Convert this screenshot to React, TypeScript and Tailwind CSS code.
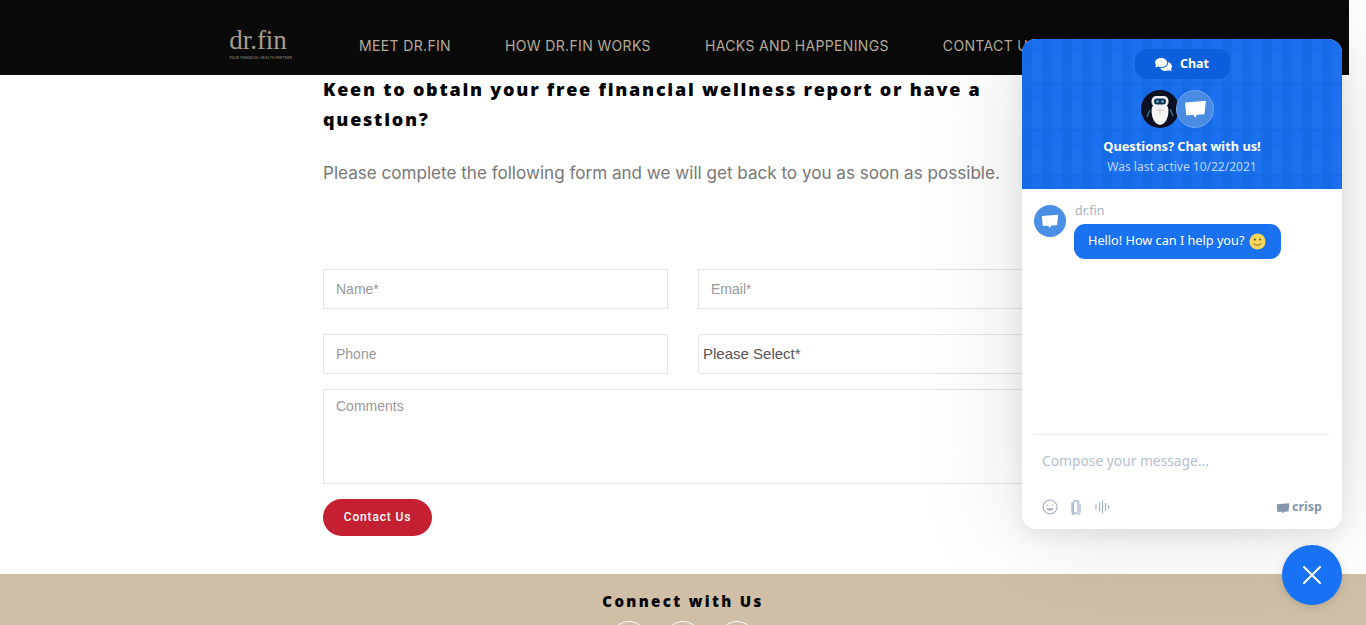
import { FaComments } from "react-icons/fa";

const NAV = ["MEET DR.FIN", "HOW DR.FIN WORKS", "HACKS AND HAPPENINGS", "CONTACT US"];

function CrispBubble({ className, fill }: { className?: string; fill: string }) {
  return (
    <svg viewBox="0 0 22 18" className={className}>
      <path d="M1 2.2 21 0.6 19.6 13.6 12.6 14 10.6 17 9 14.2 2.2 14.4Z" fill={fill} />
    </svg>
  );
}

function Robot() {
  return (
    <svg viewBox="0 0 38 38" className="w-[38px] h-[38px] shrink-0 relative">
      <circle cx="19" cy="19" r="19" fill="#0c1022" />
      <path d="M11 17c2-3 14-3 16 0 1.500 7-1 17-8 18-7-1-9.500-11-8-18Z" fill="#f4f4f4" />
      <rect x="10.500" y="6" width="17" height="11" rx="5" fill="#eef3f6" />
      <rect x="13" y="8.500" width="12" height="6" rx="3" fill="#16324d" />
      <circle cx="16.500" cy="11.500" r="1.200" fill="#5fc4ea" />
      <circle cx="21.500" cy="11.500" r="1.200" fill="#5fc4ea" />
      <path d="M9 20 6 27M29 19l3 7" stroke="#3f6f86" strokeWidth="1.500" />
      <path d="M15 20h8M19 20v5" stroke="#c9a8a8" strokeWidth=".7" />
    </svg>
  );
}

function Pattern() {
  return (
    <svg className="absolute inset-0 w-full h-full" aria-hidden="true">
      <defs>
        <pattern id="keys" width="20" height="46" patternUnits="userSpaceOnUse">
          <rect x="0" y="0" width="10" height="46" fill="#1468e4" opacity=".45" />
          <rect x="1" y="0" width="7" height="30" fill="#0f63dc" opacity=".3" />
          <rect x="11" y="16" width="8" height="26" fill="#2f7df0" opacity=".25" />
          <rect x="0" y="44" width="20" height="2" fill="#0f63dc" opacity=".45" />
        </pattern>
      </defs>
      <rect width="100%" height="100%" fill="url(#keys)" />
    </svg>
  );
}

function ChatWidget() {
  return (
    <>
      <div className="absolute left-[1022px] top-[39px] w-[320px] h-[490px] rounded-[14px] bg-white overflow-hidden flex flex-col shadow-[0_0_110px_rgba(0,0,0,0.13),0_6px_20px_rgba(0,0,0,0.08)] font-['Noto_Sans',sans-serif]">
        <div className="relative h-[150px] shrink-0 bg-[#1a6fee] flex flex-col items-center pt-[10px]">
          <Pattern />
          <div className="relative w-[95px] h-[30px] rounded-[12px] bg-[#0b5fdc] flex items-center justify-center gap-[8px] text-white text-[12.5px] font-bold">
            <FaComments className="text-[17px]" />
            <span>Chat</span>
          </div>
          <div className="relative flex mt-[11px] ml-[-9px]">
            <Robot />
            <div className="relative -ml-[3px] w-[38px] h-[38px] rounded-full bg-[#4a8ce4] border border-[#6fa5ec] flex items-center justify-center">
              <CrispBubble className="w-[23px] h-[19px]" fill="#ffffff" />
            </div>
          </div>
          <div className="relative mt-[8px] text-white text-[12.8px] leading-[20px] font-bold">Questions? Chat with us!</div>
          <div className="relative mt-[1px] text-[#bcd5f7] text-[12px] leading-[20px]">Was last active 10/22/2021</div>
        </div>
        <div className="flex-1 flex pl-[12px] pt-[16px] gap-[8px] min-h-0">
          <div className="w-[32px] h-[32px] rounded-full bg-[#4a8fe3] flex items-center justify-center shrink-0">
            <CrispBubble className="w-[18px] h-[15px]" fill="#ffffff" />
          </div>
          <div>
            <div className="text-[12.5px] leading-[12px] text-[#a9b5c1] ml-[1px]">dr.fin</div>
            <div className="mt-[7px] h-[35px] w-[207px] rounded-[11px] bg-[#1a72f0] text-white text-[12.7px] flex items-center pl-[14px] gap-[5px] pb-[1px]">
              <span>Hello! How can I help you?</span>
              <svg viewBox="0 0 18 18" className="w-[17px] h-[17px]">
                <circle cx="9" cy="9" r="8.500" fill="#f5d65a" />
                <circle cx="6.200" cy="7" r="1.100" fill="#6b5a20" />
                <circle cx="11.800" cy="7" r="1.100" fill="#6b5a20" />
                <path d="M5 11c1.500 2.500 6.500 2.500 8 0" stroke="#6b5a20" strokeWidth="1" fill="none" />
              </svg>
            </div>
          </div>
        </div>
        <div className="mx-[12px] border-t border-[#e8edf1] h-[95px] shrink-0 flex flex-col">
          <div className="pl-[8px] pt-[16px] text-[13.8px] leading-[20px] text-[#b3c0cf]">Compose your message...</div>
          <div className="flex items-center mt-[27px] pl-[8px] pr-[8px]">
            <svg viewBox="0 0 16 16" className="w-[16px] h-[16px]" fill="none" stroke="#a3b1c4" strokeWidth="1.200">
              <circle cx="8" cy="8" r="7" />
              <circle cx="5.500" cy="6.200" r=".8" fill="#a3b1c4" stroke="none" />
              <circle cx="10.500" cy="6.200" r=".8" fill="#a3b1c4" stroke="none" />
              <path d="M4.200 9.200c1.200 3.300 6.400 3.300 7.600 0Z" fill="#a3b1c4" stroke="none" />
            </svg>
            <svg viewBox="0 0 10 16" className="w-[10px] h-[16px] ml-[13px]" fill="none" stroke="#a3b1c4" strokeWidth="1.200" strokeLinecap="round">
              <path d="M7 4v8a2.300 2.300 0 0 1-4.600 0V3.500a3 3 0 0 1 5.600 0M9 5v7.500a4 4 0 0 1-8 0V4" />
            </svg>
            <svg viewBox="0 0 15 14" className="w-[15px] h-[14px] ml-[14px]" stroke="#a3b1c4" strokeWidth="1.200">
              <path d="M1 4.500v5M4.500 2.500v9M7.500 0.500v13M10.500 3v8M13.500 5v4" />
            </svg>
            <div className="ml-auto flex items-center gap-[2px] text-[#8497ac] text-[12.5px] font-bold">
              <CrispBubble className="w-[14px] h-[13px] mt-[2px]" fill="#8497ac" />
              <span>crisp</span>
            </div>
          </div>
        </div>
      </div>
      <div className="absolute left-[1282px] top-[545px] w-[60px] h-[60px] rounded-full bg-[#1972f5] flex items-center justify-center shadow-[0_2px_10px_rgba(0,0,0,0.12)]">
        <svg viewBox="0 0 18 18" className="w-[18px] h-[18px]" stroke="#ffffff" strokeWidth="2" strokeLinecap="round">
          <path d="M1 1l16 16M17 1 1 17" />
        </svg>
      </div>
    </>
  );
}

const field =
  "h-[40px] border border-[#e4e4e4] bg-white px-[12px] text-[14px] font-['Liberation_Sans',sans-serif] outline-none placeholder:text-[#999999]";

export default function App() {
  return (
    <div className="relative h-[625px] w-[1366px] overflow-hidden bg-white flex flex-col">
      <header className="h-[75px] w-[1349px] shrink-0 bg-[#0a0a0a] flex items-center pl-[229px] pt-[15px] font-['Inter',sans-serif]">
        <div className="w-[130px] shrink-0 text-[#a89e8c]">
          <div className="w-[58px] text-center font-['Liberation_Serif',serif] text-[27px] leading-[24px] -mt-[2px]">dr.fin</div>
          <div className="w-[58px] mt-[4px] text-center text-[3.500px] leading-[5px] tracking-[0.02em] whitespace-nowrap">YOUR FINANCIAL HEALTH PARTNER</div>
        </div>
        <nav className="flex gap-[54px] text-[14px] tracking-[0.025em] text-[#b5aa97] whitespace-nowrap">
          {NAV.map((n) => (
            <span key={n}>{n}</span>
          ))}
        </nav>
      </header>

      <main className="flex-1 pl-[323px] min-h-0">
        <h2 className="-mt-[1px] w-[680px] text-[18px] leading-[30px] font-extrabold tracking-[0.098em] text-black font-['Open_Sans',sans-serif]">
          Keen to obtain your free financial wellness report or have a question?
        </h2>
        <p className="mt-[24px] text-[17.08px] leading-[30px] text-[#777777] whitespace-nowrap font-['Inter',sans-serif]">
          Please complete the following form and we will get back to you as soon as possible.
        </p>
        <form className="mt-[81px] w-[720px] flex flex-col">
          <div className="flex gap-[30px]">
            <input className={`${field} w-[345px]`} placeholder="Name*" />
            <input className={`${field} w-[345px]`} placeholder="Email*" />
          </div>
          <div className="flex gap-[30px] mt-[25px]">
            <input className={`${field} w-[345px]`} placeholder="Phone" />
            <div className="h-[40px] w-[345px] border border-[#e4e4e4] rounded-[3px] pl-[4px] text-[15px] leading-[37px] text-[#555555] font-['Liberation_Sans',sans-serif]">
              Please Select*
            </div>
          </div>
          <textarea
            className={`${field} mt-[15px] !h-[95px] w-[720px] pt-[6px] resize-none`}
            placeholder="Comments"
          />
          <button
            type="button"
            className="mt-[15px] w-[109px] h-[37px] rounded-full bg-[#c42032] pb-[2px] text-white text-[12px] font-medium tracking-[0.07em] font-['Roboto',sans-serif]"
          >
            Contact Us
          </button>
        </form>
      </main>

      <footer className="h-[51px] shrink-0 bg-[#cfbfa6] flex flex-col items-center overflow-hidden">
        <div className="mt-[17px] text-[15px] leading-[20px] font-extrabold tracking-[0.157em] text-black font-['Open_Sans',sans-serif]">
          Connect with Us
        </div>
        <div className="flex gap-[18px] mt-[10px]">
          <div className="w-[36px] h-[36px] rounded-full border border-white" />
          <div className="w-[36px] h-[36px] rounded-full border border-white" />
          <div className="w-[36px] h-[36px] rounded-full border border-white" />
        </div>
      </footer>

      <ChatWidget />
    </div>
  );
}
